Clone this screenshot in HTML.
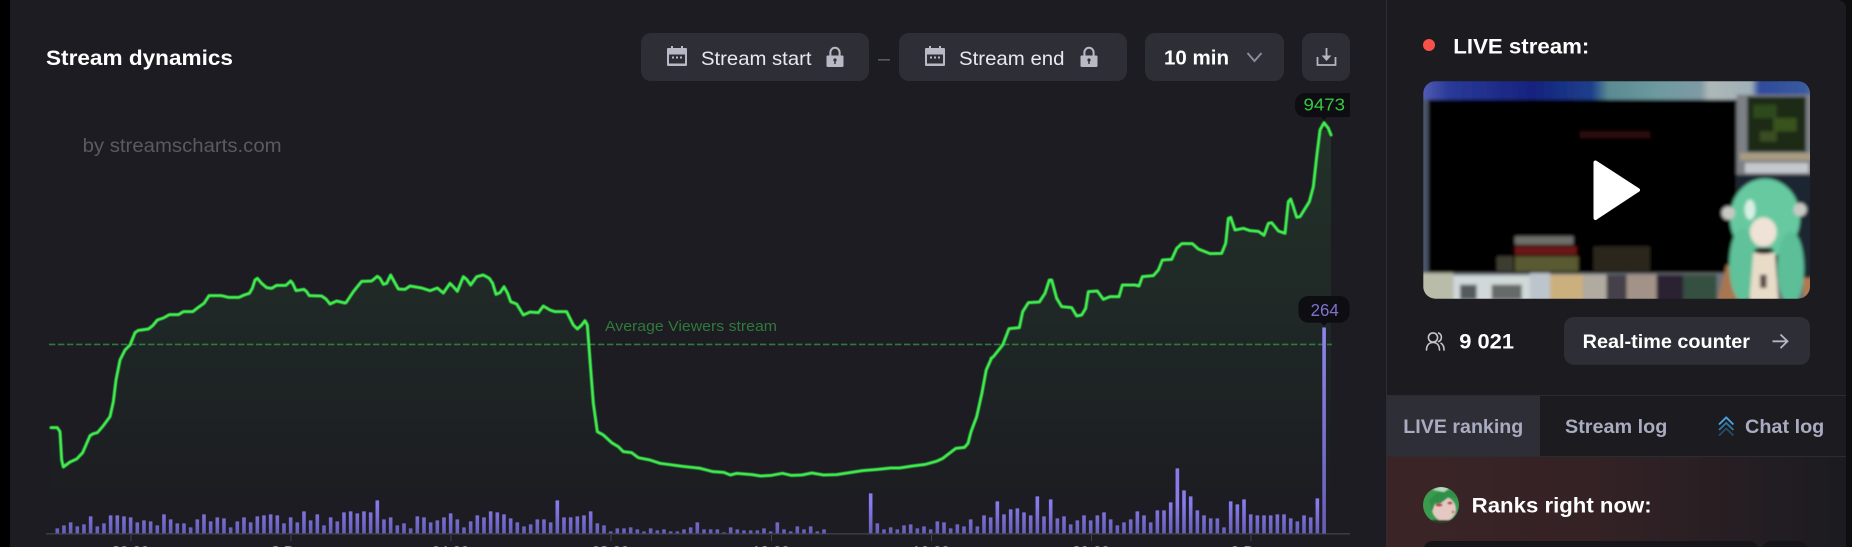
<!DOCTYPE html>
<html><head><meta charset="utf-8"><title>Stream dynamics</title>
<style>
html,body{margin:0;padding:0;background:#000;width:1852px;height:547px;overflow:hidden}
svg{display:block}
text{font-family:"Liberation Sans",sans-serif}
.b{font-weight:700}
</style></head><body>
<svg width="1852" height="547" viewBox="0 0 1852 547" xmlns="http://www.w3.org/2000/svg">
<defs>
<linearGradient id="areaG" gradientUnits="userSpaceOnUse" x1="0" y1="135" x2="0" y2="495">
<stop offset="0" stop-color="#233129"/><stop offset=".5" stop-color="#1f2826"/><stop offset=".85" stop-color="#1d2023"/><stop offset="1" stop-color="#1c1d22"/>
</linearGradient>
<linearGradient id="barG" gradientUnits="userSpaceOnUse" x1="0" y1="533" x2="0" y2="503">
<stop offset="0" stop-color="#675fb8"/><stop offset="1" stop-color="#877cec"/>
</linearGradient>
<linearGradient id="tallG" gradientUnits="userSpaceOnUse" x1="0" y1="533" x2="0" y2="327">
<stop offset="0" stop-color="#665eb5"/><stop offset="1" stop-color="#8f86ef"/>
</linearGradient>
<linearGradient id="ranksG" x1="0" y1="0" x2="1" y2="0">
<stop offset="0" stop-color="#3b2426"/><stop offset=".45" stop-color="#342225"/><stop offset="1" stop-color="#1b1b20"/>
</linearGradient>
<linearGradient id="thumbTop" x1="0" y1="0" x2="1" y2="0">
<stop offset="0" stop-color="#6a72c4"/><stop offset=".1" stop-color="#2a3a98"/><stop offset=".3" stop-color="#16237e"/><stop offset=".44" stop-color="#1c3f8a"/><stop offset=".48" stop-color="#5a8a92"/><stop offset=".6" stop-color="#6d9aa0"/><stop offset=".7" stop-color="#7f9aa4"/><stop offset=".72" stop-color="#aeb8b8"/><stop offset=".82" stop-color="#9fb0b8"/><stop offset=".84" stop-color="#2f4a9a"/><stop offset=".95" stop-color="#3a5aa0"/><stop offset="1" stop-color="#8fa0a8"/>
</linearGradient>
<filter id="soft" x="-2%" y="-2%" width="104%" height="104%"><feGaussianBlur stdDeviation=".45"/></filter>
<filter id="softer" x="-2%" y="-2%" width="104%" height="104%"><feGaussianBlur stdDeviation=".25"/></filter>
<filter id="thumbBlur" x="0" y="0" width="100%" height="100%"><feGaussianBlur stdDeviation="5"/></filter>
<filter id="avaBlur" x="-10%" y="-10%" width="120%" height="120%"><feGaussianBlur stdDeviation=".8"/></filter>
<clipPath id="thumbClip"><rect x="1423.3" y="81.2" width="386.7" height="217.5" rx="12"/></clipPath>
<clipPath id="avaClip"><circle cx="1441" cy="505" r="18"/></clipPath>
<clipPath id="areaClip">
<polygon transform="translate(40 260) scale(.33333)" points="33,503 52,503 60,515 65,600 70,621 90,606 110,597 128,578 140,550 150,527 160,521 172,518 190,497 210,470 220,425 228,360 240,300 255,270 270,255 285,218 295,211 325,207 338,197 352,180 370,174 388,164 415,164 430,155 458,155 475,142 492,130 507,107 545,107 565,112 597,112 610,106 628,100 637,85 645,60 652,55 665,70 680,83 695,85 710,76 738,76 752,63 758,70 768,92 792,88 800,95 808,107 845,108 858,117 870,132 890,123 915,129 930,129 930,705 33,705"/>
<polygon transform="translate(340 260) scale(.33333)" points="0,123 18,128 40,95 65,64 95,63 112,49 120,55 130,73 140,70 152,45 160,60 175,87 195,88 210,78 245,84 270,92 292,84 310,99 330,70 340,80 352,94 370,50 380,58 392,75 410,50 430,45 448,55 458,70 468,103 480,98 492,80 503,100 512,125 530,132 550,165 570,156 595,158 610,138 630,150 645,155 680,155 700,195 712,207 725,195 735,182 742,195 750,300 760,430 772,515 790,525 815,548 835,560 850,575 875,578 895,593 930,600 960,610 960,705 0,705"/>
<polygon points="658,463 702,468.5 702,495 658,495"/>
<polygon transform="translate(700 280) scale(.43365 .33333)" points="0,565 30,575 55,577 70,585 85,580 120,584 140,588 165,586 190,580 210,586 235,585 258,579 285,585 315,584 345,578 375,572 410,568 440,564 460,564 490,558 520,553 545,544 560,535 590,505 610,502 618,490 625,455 638,410 650,340 660,270 672,235 690,235 690,645 0,645"/>
<polygon transform="translate(960 100) scale(.33333)" points="82,805 93,775 100,770 128,735 147,686 178,683 188,635 205,608 238,606 255,580 268,540 275,540 290,595 305,620 335,623 350,648 365,645 377,625 385,575 412,573 430,598 450,590 477,590 487,555 525,555 537,558 547,530 580,527 595,510 607,480 635,478 650,445 665,431 697,431 715,447 750,461 785,460 797,430 805,355 812,352 825,390 850,385 870,392 895,394 912,406 925,370 935,368 955,393 975,400 985,305 992,297 1000,320 1010,352 1020,350 1048,305 1060,260 1070,170 1080,90 1092,68 1105,85 1113,105 1113,1185 82,1185"/>
</clipPath>
<g id="cal">
<rect x="0" y="2" width="20" height="18" rx="1" fill="#b9b9c5"/>
<rect x="4" y="0" width="2" height="3" fill="#b9b9c5"/><rect x="14" y="0" width="2" height="3" fill="#b9b9c5"/>
<rect x="2" y="8.5" width="16" height="9" fill="#2e2f36"/>
<rect x="5" y="10.5" width="2" height="2" fill="#b9b9c5"/><rect x="9" y="10.5" width="2" height="2" fill="#b9b9c5"/><rect x="13" y="10.5" width="2" height="2" fill="#b9b9c5"/>
</g>
<g id="lock">
<path d="M4.4 9V5.4a4.6 4.6 0 0 1 9.2 0V9" fill="none" stroke="#b9b9c5" stroke-width="2"/>
<rect x="0.5" y="8.5" width="17" height="11.5" rx="1.2" fill="#b9b9c5"/>
<circle cx="9" cy="13" r="1.6" fill="#2e2f36"/><rect x="8.3" y="13" width="1.4" height="4" fill="#2e2f36"/>
</g>
</defs>

<rect width="1852" height="547" fill="#000"/>
<!-- right gutter -->
<rect x="1840" y="0" width="12" height="547" fill="#0e0e11"/>
<!-- panel -->
<rect x="10" y="-12" width="1836" height="570" rx="10" fill="#1c1c22"/>
<rect x="1387" y="0" width="459" height="547" fill="#1b1b20"/>
<path d="M1836 0h2a8 8 0 0 1 8 8V0z" fill="#0e0e11"/>
<rect x="1386" y="0" width="1" height="547" fill="#2c2c33"/>

<!-- header -->
<text class="b" x="46" y="65" font-size="21" fill="#fff" textLength="187" lengthAdjust="spacingAndGlyphs">Stream dynamics</text>
<text x="82.6" y="152" font-size="19" fill="#5a5a61" textLength="199" lengthAdjust="spacingAndGlyphs">by streamscharts.com</text>

<rect x="641" y="33" width="228" height="48" rx="10" fill="#2e2f36"/>
<use href="#cal" x="667" y="46"/>
<text x="701" y="65" font-size="19.5" fill="#e8e8ee" textLength="110.5" lengthAdjust="spacingAndGlyphs">Stream start</text>
<use href="#lock" x="826" y="47"/>
<rect x="878" y="59" width="12" height="1.6" fill="#5a5a66"/>
<rect x="899" y="33" width="228" height="48" rx="10" fill="#2e2f36"/>
<use href="#cal" x="925" y="46"/>
<text x="959" y="65" font-size="19.5" fill="#e8e8ee" textLength="105.5" lengthAdjust="spacingAndGlyphs">Stream end</text>
<use href="#lock" x="1080" y="47"/>
<rect x="1145" y="33" width="139" height="48" rx="10" fill="#2e2f36"/>
<text class="b" x="1164" y="64.5" font-size="20" fill="#fff" textLength="65" lengthAdjust="spacingAndGlyphs">10 min</text>
<path d="M1247.5 53l7 8 7-8" fill="none" stroke="#8d8d98" stroke-width="1.9"/>
<rect x="1302" y="33" width="48" height="48" rx="10" fill="#2e2f36"/>
<path d="M1317.5 57v8h18v-8" fill="none" stroke="#b5b5c0" stroke-width="1.8"/>
<path d="M1325.6 48h1.8v7.5h4l-4.9 5.5-4.9-5.5h4z" fill="#b5b5c0"/>

<!-- chart -->
<rect x="45" y="130" width="1290" height="370" fill="url(#areaG)" clip-path="url(#areaClip)"/>
<line x1="49" y1="344.4" x2="1332" y2="344.4" stroke="#2f7a3a" stroke-width="1.6" stroke-dasharray="6.4 2.6"/>
<text x="605" y="331" font-size="15" fill="#2f7a3a" textLength="172" lengthAdjust="spacingAndGlyphs">Average Viewers stream</text>

<rect x="46" y="533" width="1304" height="1.6" fill="#3a3a42"/>
<g fill="#45454d">
<rect x="130.5" y="535" width="1" height="6"/><rect x="290.5" y="535" width="1" height="6"/><rect x="450.5" y="535" width="1" height="6"/><rect x="610.5" y="535" width="1" height="6"/><rect x="771" y="535" width="1" height="6"/><rect x="931" y="535" width="1" height="6"/><rect x="1091" y="535" width="1" height="6"/><rect x="1250.5" y="535" width="1" height="6"/>
</g>
<g font-size="15" fill="#8f8f99" text-anchor="middle">
<text x="130.5" y="556">20:00</text><text x="291" y="556">8 Dec</text><text x="450.5" y="556">04:00</text><text x="610.5" y="556">08:00</text><text x="771" y="556">12:00</text><text x="931" y="556">16:00</text><text x="1091" y="556">20:00</text><text x="1250.5" y="556">9 Dec</text>
</g>

<g filter="url(#softer)">
<path fill="none" stroke="url(#barG)" stroke-width="3.6" d="M57.3 533.4v-5m6.667 5v-8m6.667 8v-11m6.667 11v-7m6.667 7v-9m6.667 9v-17m6.667 17v-7m6.667 7v-10m6.667 10v-18m6.667 18v-18m6.667 18v-17m6.667 17v-16m6.667 16v-11m6.667 11v-13m6.667 13v-12m6.667 12v-8m6.667 8v-19m6.667 19v-14m6.667 14v-10m6.667 10v-10m6.667 10v-6m6.667 6v-14m6.667 14v-19m6.667 19v-12m6.667 12v-16m6.667 16v-15m6.667 15v-6m6.667 6v-12m6.667 12v-16m6.667 16v-11m6.667 11v-17m6.667 17v-18m6.667 18v-19m6.667 19v-18m6.667 18v-10m6.667 10v-16m6.667 16v-11m6.667 11v-22m6.667 22v-13m6.667 13v-19m6.667 19v-8m6.667 8v-16m6.667 16v-12m6.667 12v-21m6.667 21v-22m6.667 22v-20m6.667 20v-22m6.667 22v-21m6.667 21v-33m6.667 33v-14m6.667 14v-16m6.667 16v-8m6.667 8v-10m6.667 10v-5m6.667 5v-17m6.667 17v-16m6.667 16v-11m6.667 11v-13m6.667 13v-16m6.667 16v-20m6.667 20v-14m6.667 14v-6m6.667 6v-12m6.667 12v-18m6.667 18v-16m6.667 16v-22m6.667 22v-21
m6.667 21v-19m6.667 19v-15m6.667 15v-11m6.667 11v-7m6.667 7v-9m6.667 9v-14m6.667 14v-14m6.667 14v-11m6.667 11v-33m6.667 33v-16m6.667 16v-16m6.667 16v-17m6.667 17v-18m6.667 18v-22m6.667 22v-10m6.667 10v-8m6.667 8v-2m6.667 2v-5m6.667 5v-5m6.667 5v-6m6.667 6v-4m6.667 4v-2m6.667 2v-5m6.667 5v-3m6.667 3v-4m6.667 4v-2m6.667 2v-2m6.667 2v-4m6.667 4v-6m6.667 6v-11
m6.667 11v-4m6.667 4v-4m6.667 4v-4m6.667 4v-1m6.667 1v-6m6.667 6v-4m6.667 4v-3m6.667 3v-3m6.667 3v-3m6.667 3v-5m6.667 5v-2m6.667 2v-11m6.667 11v-4m6.667 4v-2m6.667 2v-7m6.667 7v-4m6.667 4v-7m6.667 7v-2m6.667 2v-4
m40 4m6.667 0v-40m6.667 40v-10m6.667 10v-4m6.667 4v-6m6.667 6v-4m6.667 4v-8m6.667 8v-9m6.667 9v-5m6.667 5v-7m6.667 7v-4m6.667 4v-12m6.667 12v-11m6.667 11v-5m6.667 5v-9m6.667 9v-7m6.667 7v-14m6.667 14v-7m6.667 7v-18m6.667 18v-16m6.667 16v-32m6.667 32v-19m6.667 19v-24m6.667 24v-25m6.667 25v-21m6.667 21v-18m6.667 18v-37m6.667 37v-17m6.667 17v-34m6.667 34v-15m6.667 15v-17m6.667 17v-9m6.667 9v-13m6.667 13v-18m6.667 18v-13m6.667 13v-18m6.667 18v-21m6.667 21v-14m6.667 14v-8m6.667 8v-11m6.667 11v-14m6.667 14v-22m6.667 22v-18m6.667 18v-11m6.667 11v-23m6.667 23v-23m6.667 23v-31m6.667 31v-65m6.667 65v-43m6.667 43v-37m6.667 37v-23m6.667 23v-18m6.667 18v-15m6.667 15v-15m6.667 15v-6m6.667 6v-32m6.667 32v-29m6.667 29v-34m6.667 34v-19m6.667 19v-18m6.667 18v-18m6.667 18v-18m6.667 18v-19m6.667 19v-19m6.667 19v-15m6.667 15v-12m6.667 12v-18m6.667 18v-16m6.667 16v-35"/>
<rect x="1322.3" y="327.5" width="3.6" height="206" fill="url(#tallG)"/>
</g>

<g fill="none" stroke="#41f04f" stroke-width="3" stroke-linejoin="round" stroke-linecap="round" filter="url(#soft)">
<polyline vector-effect="non-scaling-stroke" transform="translate(40 260) scale(.33333)" points="33,503 52,503 60,515 65,600 70,621 90,606 110,597 128,578 140,550 150,527 160,521 172,518 190,497 210,470 220,425 228,360 240,300 255,270 270,255 285,218 295,211 325,207 338,197 352,180 370,174 388,164 415,164 430,155 458,155 475,142 492,130 507,107 545,107 565,112 597,112 610,106 628,100 637,85 645,60 652,55 665,70 680,83 695,85 710,76 738,76 752,63 758,70 768,92 792,88 800,95 808,107 845,108 858,117 870,132 890,123 915,129"/>
<polyline vector-effect="non-scaling-stroke" transform="translate(340 260) scale(.33333)" points="18,128 40,95 65,64 95,63 112,49 120,55 130,73 140,70 152,45 160,60 175,87 195,88 210,78 245,84 270,92 292,84 310,99 330,70 340,80 352,94 370,50 380,58 392,75 410,50 430,45 448,55 458,70 468,103 480,98 492,80 503,100 512,125 530,132 550,165 570,156 595,158 610,138 630,150 645,155 680,155 700,195 712,207 725,195 735,182 742,195 750,300 760,430 772,515 790,525 815,548 835,560 850,575 875,578 895,593 930,600 960,610"/>
<polyline points="660,463.3 680,466 700,468.3"/>
<polyline vector-effect="non-scaling-stroke" transform="translate(700 280) scale(.43365 .33333)" points="0,565 30,575 55,577 70,585 85,580 120,584 140,588 165,586 190,580 210,586 235,585 258,579 285,585 315,584 345,578 375,572 410,568 440,564 460,564 490,558 520,553 545,544 560,535 590,505 610,502 618,490 625,455 638,410 650,340 660,270 672,235"/>
<polyline vector-effect="non-scaling-stroke" transform="translate(960 100) scale(.33333)" points="93,775 100,770 128,735 147,686 178,683 188,635 205,608 238,606 255,580 268,540 275,540 290,595 305,620 335,623 350,648 365,645 377,625 385,575 412,573 430,598 450,590 477,590 487,555 525,555 537,558 547,530 580,527 595,510 607,480 635,478 650,445 665,431 697,431 715,447 750,461 785,460 797,430 805,355 812,352 825,390 850,385 870,392 895,394 912,406 925,370 935,368 955,393 975,400 985,305 992,297 1000,320 1010,352 1020,350 1048,305 1060,260 1070,170 1080,90 1092,68 1105,85 1113,105"/>
</g>

<!-- tooltips -->
<path d="M1305 93h45v24h-23l-3 3-3-3h-16a10 10 0 0 1-10-10v-4a10 10 0 0 1 10-10z" fill="#0e0e12"/>
<text x="1303.5" y="110.7" font-size="17.5" fill="#35c742" textLength="41.5" lengthAdjust="spacingAndGlyphs">9473</text>
<path d="M1308.4 296h31.2a10 10 0 0 1 10 10v6.7a10 10 0 0 1-10 10H1327l-3 3-3-3h-12.6a10 10 0 0 1-10-10V306a10 10 0 0 1 10-10z" fill="#0e0e12"/>
<text x="1310.6" y="316" font-size="17.5" fill="#7d72d0" textLength="28.2" lengthAdjust="spacingAndGlyphs">264</text>

<!-- live -->
<circle cx="1429" cy="45" r="6" fill="#f9504a"/>
<text class="b" x="1453.3" y="53.3" font-size="21" fill="#fff" textLength="136" lengthAdjust="spacingAndGlyphs">LIVE stream:</text>

<!-- thumbnail -->
<g clip-path="url(#thumbClip)">
<g filter="url(#thumbBlur)" transform="translate(1420 78) scale(.33333)">
<rect x="-40" y="-40" width="1260" height="752" fill="#6d7378"/>
<rect x="-40" y="-40" width="1260" height="105" fill="url(#thumbTop)"/>
<rect x="-40" y="65" width="65" height="520" fill="#4a5468"/>
<rect x="25" y="65" width="925" height="520" fill="#000"/>
<rect x="480" y="160" width="210" height="20" fill="#2a0808"/>
<rect x="950" y="50" width="270" height="545" fill="#7d8085"/>
<rect x="982" y="56" width="176" height="166" fill="#1c2a14"/>
<rect x="1000" y="80" width="70" height="40" fill="#2f4a1e"/><rect x="1060" y="120" width="70" height="40" fill="#38521f"/><rect x="1020" y="160" width="50" height="30" fill="#3a4e20"/>
<rect x="960" y="225" width="260" height="22" fill="#a89c80"/>
<rect x="975" y="255" width="190" height="30" fill="#c4c8cc"/>
<rect x="950" y="290" width="270" height="310" fill="#1e2630"/>
<rect x="-40" y="585" width="140" height="127" fill="#b8bca8"/>
<rect x="100" y="592" width="230" height="120" fill="#d0d8d8"/>
<rect x="120" y="620" width="50" height="45" fill="#555a5a"/><rect x="215" y="620" width="90" height="45" fill="#666a68"/>
<rect x="330" y="585" width="60" height="127" fill="#bcc4cc"/>
<rect x="390" y="590" width="100" height="122" fill="#cbb07e"/>
<rect x="490" y="590" width="70" height="122" fill="#b0aaa0"/>
<rect x="560" y="590" width="60" height="122" fill="#45404a"/>
<rect x="620" y="590" width="90" height="122" fill="#a29288"/>
<rect x="710" y="590" width="80" height="122" fill="#2a2030"/>
<rect x="790" y="590" width="100" height="122" fill="#34503f"/>
<rect x="285" y="475" width="175" height="25" fill="#6f706a"/>
<rect x="285" y="505" width="185" height="25" fill="#6d1414"/>
<rect x="230" y="535" width="50" height="45" fill="#3c3c30"/>
<rect x="285" y="535" width="190" height="45" fill="#5a5a30"/>
<rect x="520" y="505" width="170" height="75" fill="#2a251c"/>
<polygon points="880,712 920,560 970,580 985,712" fill="#a87650"/>
<rect x="1150" y="600" width="70" height="112" fill="#b07a50"/>
<ellipse cx="1035" cy="420" rx="105" ry="118" fill="#66c9a0"/>
<ellipse cx="968" cy="560" rx="40" ry="110" fill="#5fc29a"/>
<ellipse cx="1112" cy="570" rx="40" ry="110" fill="#5cbf98"/>
<ellipse cx="1030" cy="462" rx="40" ry="44" fill="#efe2d6"/>
<ellipse cx="990" cy="395" rx="16" ry="30" fill="#d8efe4"/>
<circle cx="925" cy="405" r="20" fill="#c8c8c4"/><circle cx="1140" cy="395" r="20" fill="#c8c8c4"/>
<polygon points="1000,525 1065,525 1078,712 985,712" fill="#e8dcc8"/>
<ellipse cx="1032" cy="518" rx="30" ry="10" fill="#2a2020"/>
<rect x="1020" y="590" width="20" height="40" fill="#5a5048"/>
</g>
<path d="M1595.5 162.5L1638 190 1595.5 218z" fill="#fff" stroke="#fff" stroke-width="4" stroke-linejoin="round"/>
</g>

<!-- viewers -->
<g fill="none" stroke="#c5c5ce" stroke-width="1.6" stroke-linecap="round">
<circle cx="1433" cy="337.5" r="4.6"/>
<path d="M1426.5 350c0-5 2.8-7.5 6.5-7.5s6.5 2.5 6.5 7.5"/>
<path d="M1438.6 333a4.7 4.7 0 0 1 0 8.6"/>
<path d="M1441 343.3c2 1 3 3.6 3 6.7"/>
</g>
<text class="b" x="1459.3" y="348.3" font-size="21" fill="#fff" textLength="54.7" lengthAdjust="spacingAndGlyphs">9 021</text>
<rect x="1564" y="317" width="246" height="47.7" rx="10" fill="#2e2f36"/>
<text class="b" x="1582.7" y="348" font-size="19" fill="#fff" textLength="167.3" lengthAdjust="spacingAndGlyphs">Real-time counter</text>
<path d="M1772.5 341.3h15M1780.5 334.5l7 6.8-7 6.8" fill="none" stroke="#b5b5c0" stroke-width="1.8"/>

<!-- tabs -->
<rect x="1387" y="395" width="459" height="1" fill="#2c2c33"/>
<rect x="1387" y="396" width="153" height="60" fill="#2e2f36"/>
<rect x="1387" y="456" width="459" height="1" fill="#2c2c33"/>
<g font-weight="700" font-size="19" fill="#a9abc0">
<text x="1403.3" y="433" textLength="120" lengthAdjust="spacingAndGlyphs">LIVE ranking</text>
<text x="1565" y="433" textLength="102.3" lengthAdjust="spacingAndGlyphs">Stream log</text>
<text x="1745" y="433" textLength="79.3" lengthAdjust="spacingAndGlyphs">Chat log</text>
</g>
<g fill="none" stroke-width="1.9">
<path d="M1719 424.5l7.2-7 7.2 7" stroke="#4aa3e0"/>
<path d="M1719 430l7.2-7 7.2 7" stroke="#37749f"/>
<path d="M1719 435.5l7.2-7 7.2 7" stroke="#2a4a64"/>
</g>

<!-- ranks -->
<rect x="1387" y="457" width="459" height="90" fill="url(#ranksG)"/>
<g clip-path="url(#avaClip)">
<rect x="1420" y="484" width="42" height="42" fill="#3b9a4e"/>
<g filter="url(#avaBlur)">
<ellipse cx="1444" cy="509" rx="12" ry="12" fill="#e3c9c2"/>
<path d="M1429 500l10-9 14 0 6 8-10-2-8 6-6 1-3 8z" fill="#2f8f46"/>
<path d="M1432 490l8-4 10 2-6 4z" fill="#b8d8c0"/>
<ellipse cx="1439" cy="505" rx="3.5" ry="1.6" fill="#b34a4a"/>
<ellipse cx="1450" cy="503" rx="2.6" ry="1.5" fill="#b34a4a"/>
<circle cx="1453" cy="512" r="1.2" fill="#d43a3a"/>
<rect x="1432" y="520" width="20" height="6" fill="#2a3a2c"/>
</g>
</g>
<text class="b" x="1471.7" y="512.7" font-size="21" fill="#fff" textLength="180" lengthAdjust="spacingAndGlyphs">Ranks right now:</text>
<rect x="1423" y="541" width="335.7" height="30" rx="10" fill="#15151a"/>
<rect x="1761.7" y="541" width="46.3" height="30" rx="10" fill="#15151a"/>
</svg>
</body></html>
